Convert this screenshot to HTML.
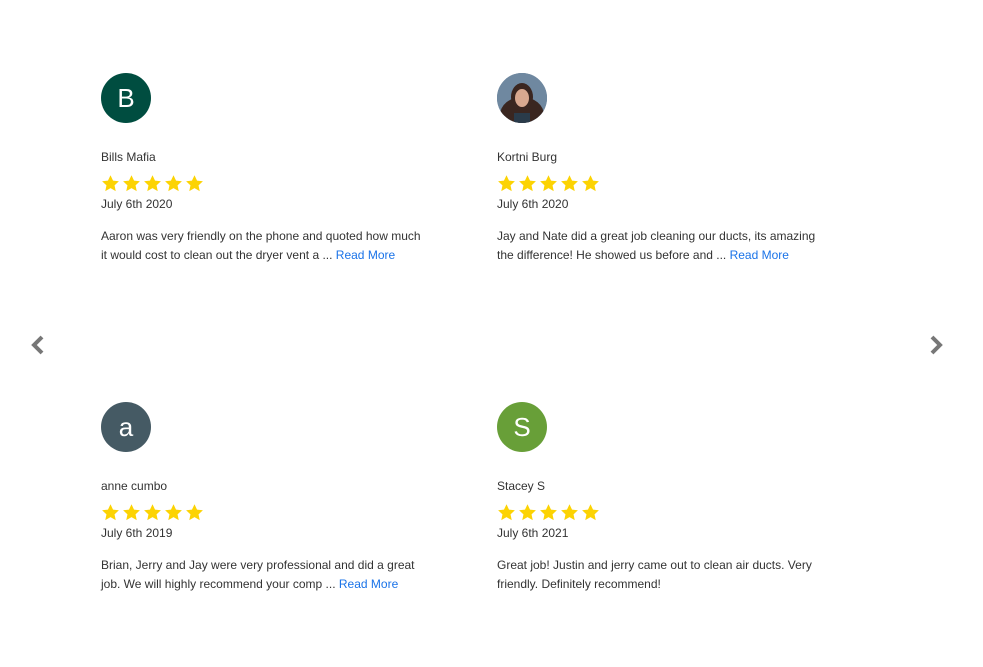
<!DOCTYPE html>
<html><head><meta charset="utf-8"><style>
*{margin:0;padding:0;box-sizing:border-box}
body{width:983px;height:667px;background:#fff;font-family:"Segoe UI","Liberation Sans",sans-serif;color:#333;position:relative;overflow:hidden}
.card{position:absolute;width:330px}
.av{width:50px;height:50px;border-radius:50%;color:#fff;font-size:26px;display:flex;align-items:center;justify-content:center;font-family:"Liberation Sans",sans-serif;overflow:hidden}
.name{position:absolute;top:77px;font-size:12px;color:#333}
.stars{position:absolute;top:101px;left:0;display:flex;gap:2px}
.date{position:absolute;top:124px;font-size:12px}
.txt{position:absolute;top:154px;font-size:12px;line-height:19px;width:324px}
.txt a{color:#1a73e8;text-decoration:none}
.arrow{position:absolute;top:335px}
</style></head><body>
<svg width="0" height="0" style="position:absolute"><defs><symbol id="st" viewBox="0 0 24 24"><path d="M12 1.5l3.2 6.9 7.4.8-5.5 5.1 1.5 7.4L12 17.9l-6.6 3.8 1.5-7.4L1.4 9.2l7.4-.8z" fill="#fcd303"/></symbol></defs></svg>

<div class="card" style="left:101px;top:73px">
<div class="av" style="background:#004d40">B</div>
<div class="name">Bills Mafia</div>
<div class="stars"><svg width="19" height="19"><use href="#st"/></svg><svg width="19" height="19"><use href="#st"/></svg><svg width="19" height="19"><use href="#st"/></svg><svg width="19" height="19"><use href="#st"/></svg><svg width="19" height="19"><use href="#st"/></svg></div>
<div class="date">July 6th 2020</div>
<div class="txt">Aaron was very friendly on the phone and quoted how much it would cost to clean out the dryer vent a ... <a>Read More</a></div>
</div>

<div class="card" style="left:497px;top:73px">
<div class="av" style="background:#5a7590"><svg width="50" height="50"><rect width="50" height="50" fill="#6f88a0"/><ellipse cx="25" cy="42" rx="22" ry="18" fill="#3a2620"/><ellipse cx="25" cy="24" rx="11" ry="14" fill="#3b2620"/><ellipse cx="25" cy="25" rx="7" ry="9" fill="#d9a88f"/><rect x="17" y="40" width="16" height="12" fill="#2a3b4a"/></svg></div>
<div class="name">Kortni Burg</div>
<div class="stars"><svg width="19" height="19"><use href="#st"/></svg><svg width="19" height="19"><use href="#st"/></svg><svg width="19" height="19"><use href="#st"/></svg><svg width="19" height="19"><use href="#st"/></svg><svg width="19" height="19"><use href="#st"/></svg></div>
<div class="date">July 6th 2020</div>
<div class="txt" style="width:330px">Jay and Nate did a great job cleaning our ducts, its amazing the difference! He showed us before and ... <a>Read More</a></div>
</div>

<div class="card" style="left:101px;top:402px">
<div class="av" style="background:#455a64">a</div>
<div class="name">anne cumbo</div>
<div class="stars"><svg width="19" height="19"><use href="#st"/></svg><svg width="19" height="19"><use href="#st"/></svg><svg width="19" height="19"><use href="#st"/></svg><svg width="19" height="19"><use href="#st"/></svg><svg width="19" height="19"><use href="#st"/></svg></div>
<div class="date">July 6th 2019</div>
<div class="txt" style="width:320px">Brian, Jerry and Jay were very professional and did a great job. We will highly recommend your comp ... <a>Read More</a></div>
</div>

<div class="card" style="left:497px;top:402px">
<div class="av" style="background:#689f38">S</div>
<div class="name">Stacey S</div>
<div class="stars"><svg width="19" height="19"><use href="#st"/></svg><svg width="19" height="19"><use href="#st"/></svg><svg width="19" height="19"><use href="#st"/></svg><svg width="19" height="19"><use href="#st"/></svg><svg width="19" height="19"><use href="#st"/></svg></div>
<div class="date">July 6th 2021</div>
<div class="txt" style="width:330px">Great job! Justin and jerry came out to clean air ducts. Very friendly. Definitely recommend!</div>
</div>

<svg class="arrow" style="left:30px" width="16" height="20" viewBox="0 0 16 20"><path d="M12 2L4 10l8 8" fill="none" stroke="#777" stroke-width="4"/></svg>
<svg class="arrow" style="left:928px" width="16" height="20" viewBox="0 0 16 20"><path d="M4 2l8 8-8 8" fill="none" stroke="#777" stroke-width="4"/></svg>
</body></html>
